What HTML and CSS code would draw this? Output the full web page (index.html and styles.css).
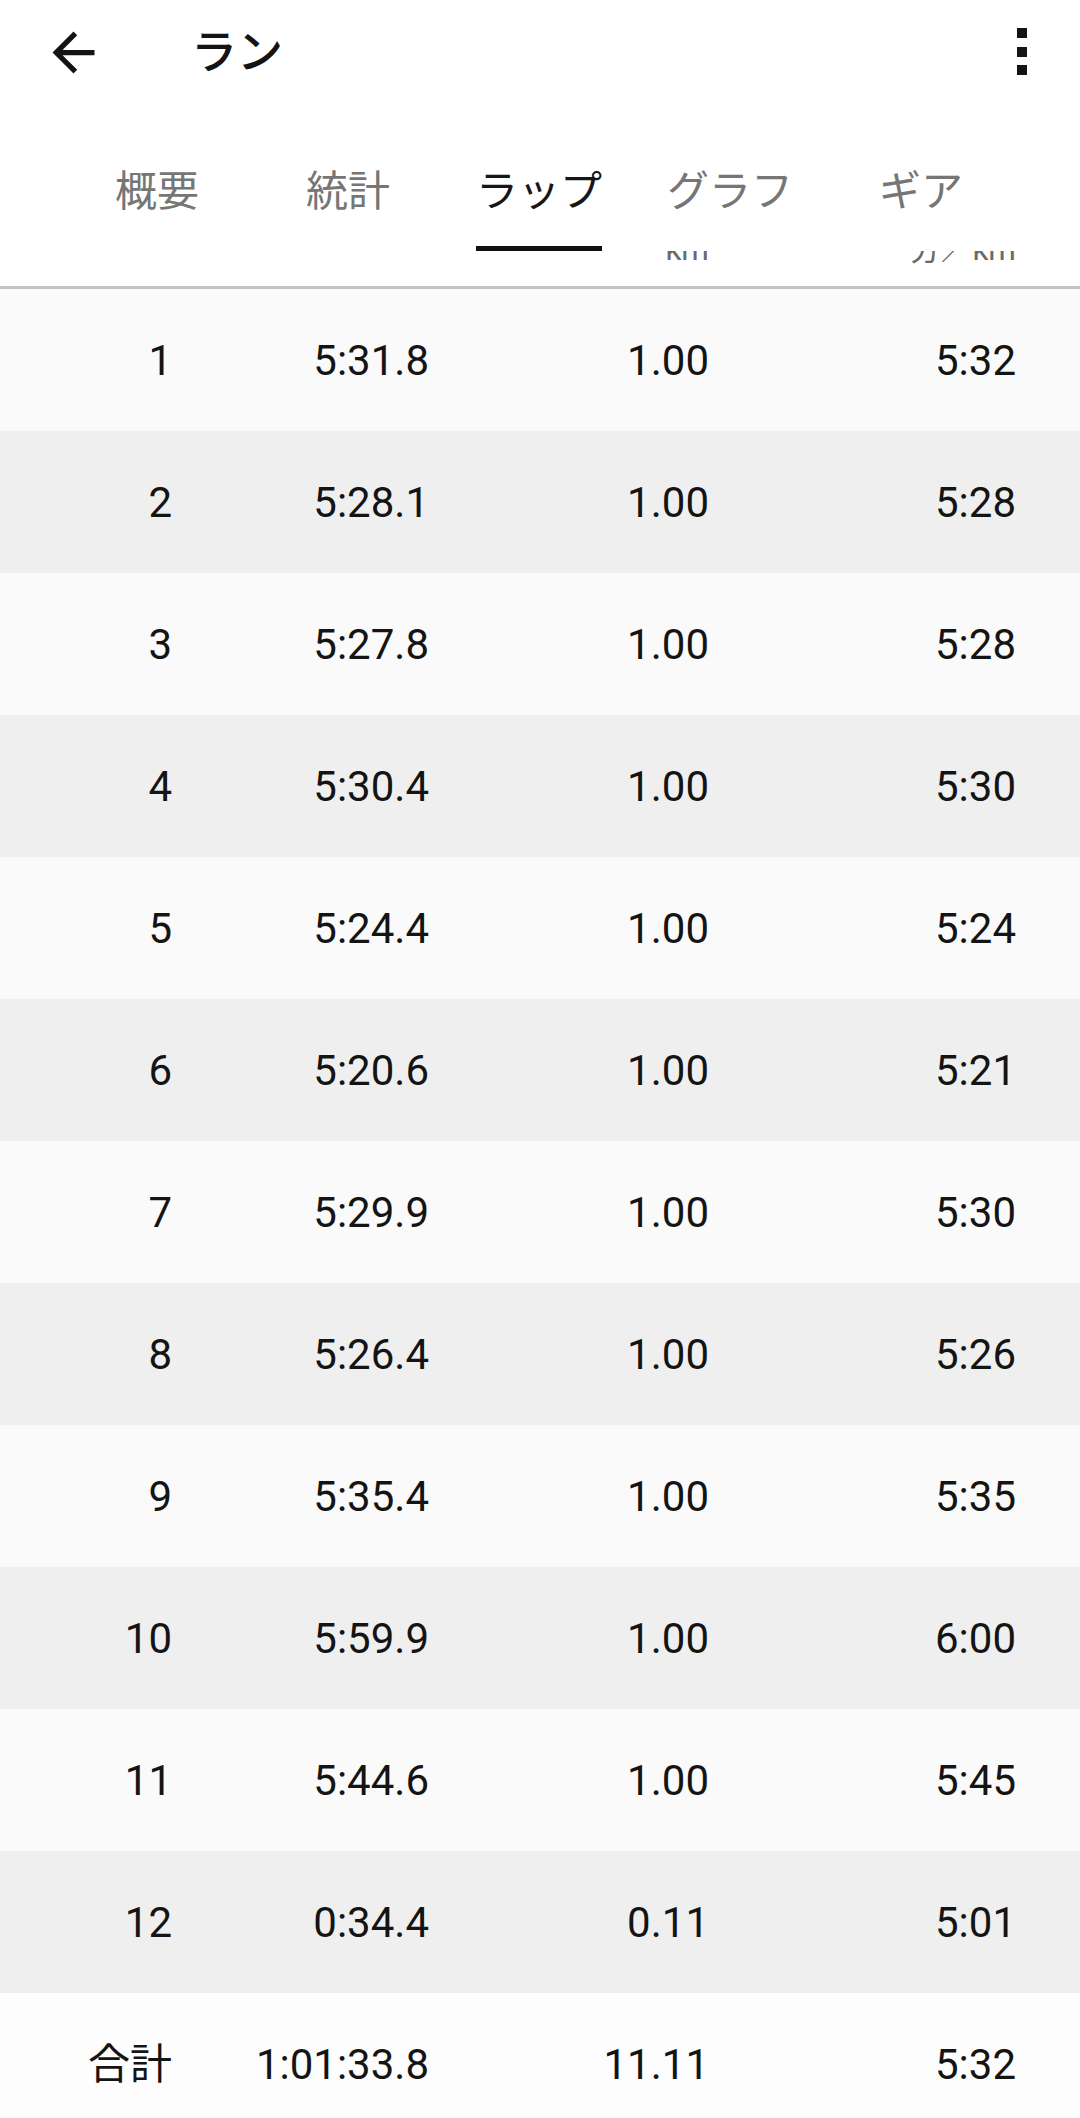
FILE: index.html
```html
<!DOCTYPE html>
<html lang="ja">
<head>
<meta charset="utf-8">
<title>ラン</title>
<link rel="stylesheet" href="styles.css">
</head>
<body>
<div class="app">
  <header class="toolbar">
    <svg class="back" viewBox="0 0 24 24" width="63" height="63"><path d="M20 11H7.83l5.59-5.59L12 4l-8 8 8 8 1.41-1.41L7.83 13H20v-2z" fill="#141414"/></svg>
    <div class="title">ラン</div>
    <div class="kebab"><span></span><span></span><span></span></div>
  </header>
  <nav class="tabs">
    <div class="tab"><span class="label">概要</span></div>
    <div class="tab"><span class="label">統計</span></div>
    <div class="tab active"><span class="label">ラップ</span></div>
    <div class="tab"><span class="label">グラフ</span></div>
    <div class="tab"><span class="label">ギア</span></div>
  </nav>
  <div class="thead">
    <div class="trow head">
      <div class="c"></div>
      <div class="c"></div>
      <div class="c">km</div>
      <div class="c">分／km</div>
    </div>
  </div>
  <div class="table">
    <div class="trow"><div class="c">1</div><div class="c">5:31.8</div><div class="c">1.00</div><div class="c">5:32</div></div>
    <div class="trow"><div class="c">2</div><div class="c">5:28.1</div><div class="c">1.00</div><div class="c">5:28</div></div>
    <div class="trow"><div class="c">3</div><div class="c">5:27.8</div><div class="c">1.00</div><div class="c">5:28</div></div>
    <div class="trow"><div class="c">4</div><div class="c">5:30.4</div><div class="c">1.00</div><div class="c">5:30</div></div>
    <div class="trow"><div class="c">5</div><div class="c">5:24.4</div><div class="c">1.00</div><div class="c">5:24</div></div>
    <div class="trow"><div class="c">6</div><div class="c">5:20.6</div><div class="c">1.00</div><div class="c">5:21</div></div>
    <div class="trow"><div class="c">7</div><div class="c">5:29.9</div><div class="c">1.00</div><div class="c">5:30</div></div>
    <div class="trow"><div class="c">8</div><div class="c">5:26.4</div><div class="c">1.00</div><div class="c">5:26</div></div>
    <div class="trow"><div class="c">9</div><div class="c">5:35.4</div><div class="c">1.00</div><div class="c">5:35</div></div>
    <div class="trow"><div class="c">10</div><div class="c">5:59.9</div><div class="c">1.00</div><div class="c">6:00</div></div>
    <div class="trow"><div class="c">11</div><div class="c">5:44.6</div><div class="c">1.00</div><div class="c">5:45</div></div>
    <div class="trow"><div class="c">12</div><div class="c">0:34.4</div><div class="c">0.11</div><div class="c">5:01</div></div>
    <div class="trow total"><div class="c">合計</div><div class="c">1:01:33.8</div><div class="c">11.11</div><div class="c">5:32</div></div>
  </div>
</div>
</body>
</html>
```

FILE: styles.css
```css
html, body {
  margin: 0;
  padding: 0;
  background: #ffffff;
}
body {
  font-family: Roboto, "Noto Sans CJK JP", sans-serif;
  color: #141414;
  overflow: hidden;
}
.app {
  width: 1080px;
  height: 2118px;
  overflow: hidden;
}
.toolbar {
  height: 104px;
  display: flex;
  align-items: center;
  padding: 0 53px 0 42px;
}
.back {
  display: block;
  flex: none;
}
.title {
  margin-left: 86px;
  font-family: Roboto, "Noto Sans CJK JP", sans-serif;
  font-size: 46px;
  font-weight: 500;
  line-height: 60px;
  color: #141414;
  flex: 1;
}
.kebab {
  display: flex;
  flex-direction: column;
  gap: 8.5px;
  margin-top: -1px;
}
.kebab span {
  display: block;
  width: 10px;
  height: 10px;
  background: #141414;
}
.tabs {
  height: 147px;
  display: flex;
  justify-content: center;
  padding-right: 2px;
}
.tab {
  width: 191px;
  display: flex;
  flex-direction: column;
  align-items: center;
  justify-content: flex-end;
}
.label {
  font-family: "Noto Sans CJK JP", sans-serif;
  font-size: 42px;
  line-height: 50px;
  color: #767676;
  padding-bottom: 33px;
  border-bottom: 5px solid transparent;
}
.tab.active .label {
  color: #161616;
  border-bottom-color: #111111;
}
.thead {
  height: 35px;
  overflow: hidden;
  border-bottom: 3px solid #c3c3c3;
}
.trow {
  display: grid;
  grid-template-columns: 172px 257px 280px 307px;
  align-items: center;
}
.trow .c {
  text-align: right;
  white-space: nowrap;
}
.head {
  margin-top: -17px;
  font-size: 31.5px;
  line-height: 31.5px;
  color: #6a6a6a;
}
.table .trow {
  height: 142px;
  font-size: 42px;
  line-height: 48px;
  padding-top: 2px;
  box-sizing: border-box;
  color: #141414;
}
.table .trow:nth-child(odd) {
  background: #fafafa;
}
.table .trow:nth-child(even) {
  background: #efefef;
}
.table .trow.total {
  background: #fdfdfd;
}
```
